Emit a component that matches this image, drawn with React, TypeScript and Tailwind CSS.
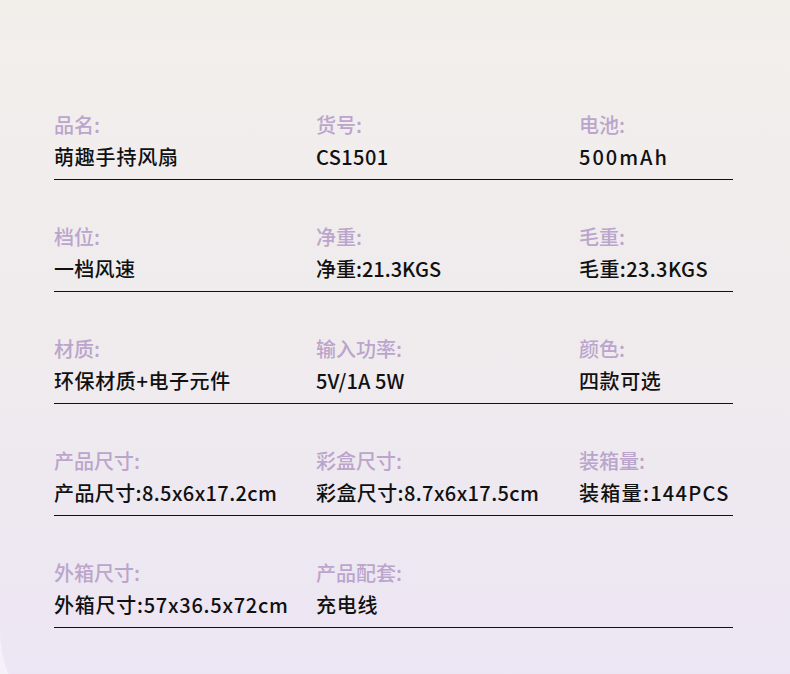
type Cell = { label: string; value: string; track: string };

const rows: Cell[][] = [
  [
    { label: '品名:', value: '萌趣手持风扇', track: 'tracking-[0.8px]' },
    { label: '货号:', value: 'CS1501', track: 'tracking-[0.4px]' },
    { label: '电池:', value: '500mAh', track: 'tracking-[2px]' },
  ],
  [
    { label: '档位:', value: '一档风速', track: 'tracking-[0.3px]' },
    { label: '净重:', value: '净重:21.3KGS', track: 'tracking-normal' },
    { label: '毛重:', value: '毛重:23.3KGS', track: 'tracking-[0.4px]' },
  ],
  [
    { label: '材质:', value: '环保材质+电子元件', track: 'tracking-[0.6px]' },
    { label: '输入功率:', value: '5V/1A 5W', track: 'tracking-[0.1px]' },
    { label: '颜色:', value: '四款可选', track: 'tracking-[0.6px]' },
  ],
  [
    { label: '产品尺寸:', value: '产品尺寸:8.5x6x17.2cm', track: 'tracking-[0.4px]' },
    { label: '彩盒尺寸:', value: '彩盒尺寸:8.7x6x17.5cm', track: 'tracking-[0.4px]' },
    { label: '装箱量:', value: '装箱量:144PCS', track: 'tracking-[1.3px]' },
  ],
  [
    { label: '外箱尺寸:', value: '外箱尺寸:57x36.5x72cm', track: 'tracking-[0.75px]' },
    { label: '产品配套:', value: '充电线', track: 'tracking-[0.8px]' },
  ],
];

export default function App() {
  return (
    <div className="w-[790px] h-[674px] overflow-hidden bg-[#f5f1f9] font-['Noto_Sans_CJK_SC','Noto_Sans',sans-serif]">
      <div className="h-[750px] rounded-bl-[120px] bg-gradient-to-b from-[#f2efeb] via-[#efebee] to-[#ece4f5] pt-[111px] px-[54px]">
        {/* Spec rows */}
        <div className="w-[679px]">
          {rows.map((row, i) => (
            <div
              key={i}
              className="grid grid-cols-[262px_263px_154px] border-b border-[#111] pb-[8px] mb-[43px]"
            >
              {row.map(cell => (
                <div key={cell.label} className="flex flex-col gap-[4px]">
                  <span className="text-[20px] leading-[28px] text-[#bba5cc] font-medium">{cell.label}</span>
                  <span className={`text-[20px] leading-[28px] text-[#111] font-medium whitespace-nowrap ${cell.track}`}>
                    {cell.value}
                  </span>
                </div>
              ))}
            </div>
          ))}
        </div>
      </div>
    </div>
  );
}
